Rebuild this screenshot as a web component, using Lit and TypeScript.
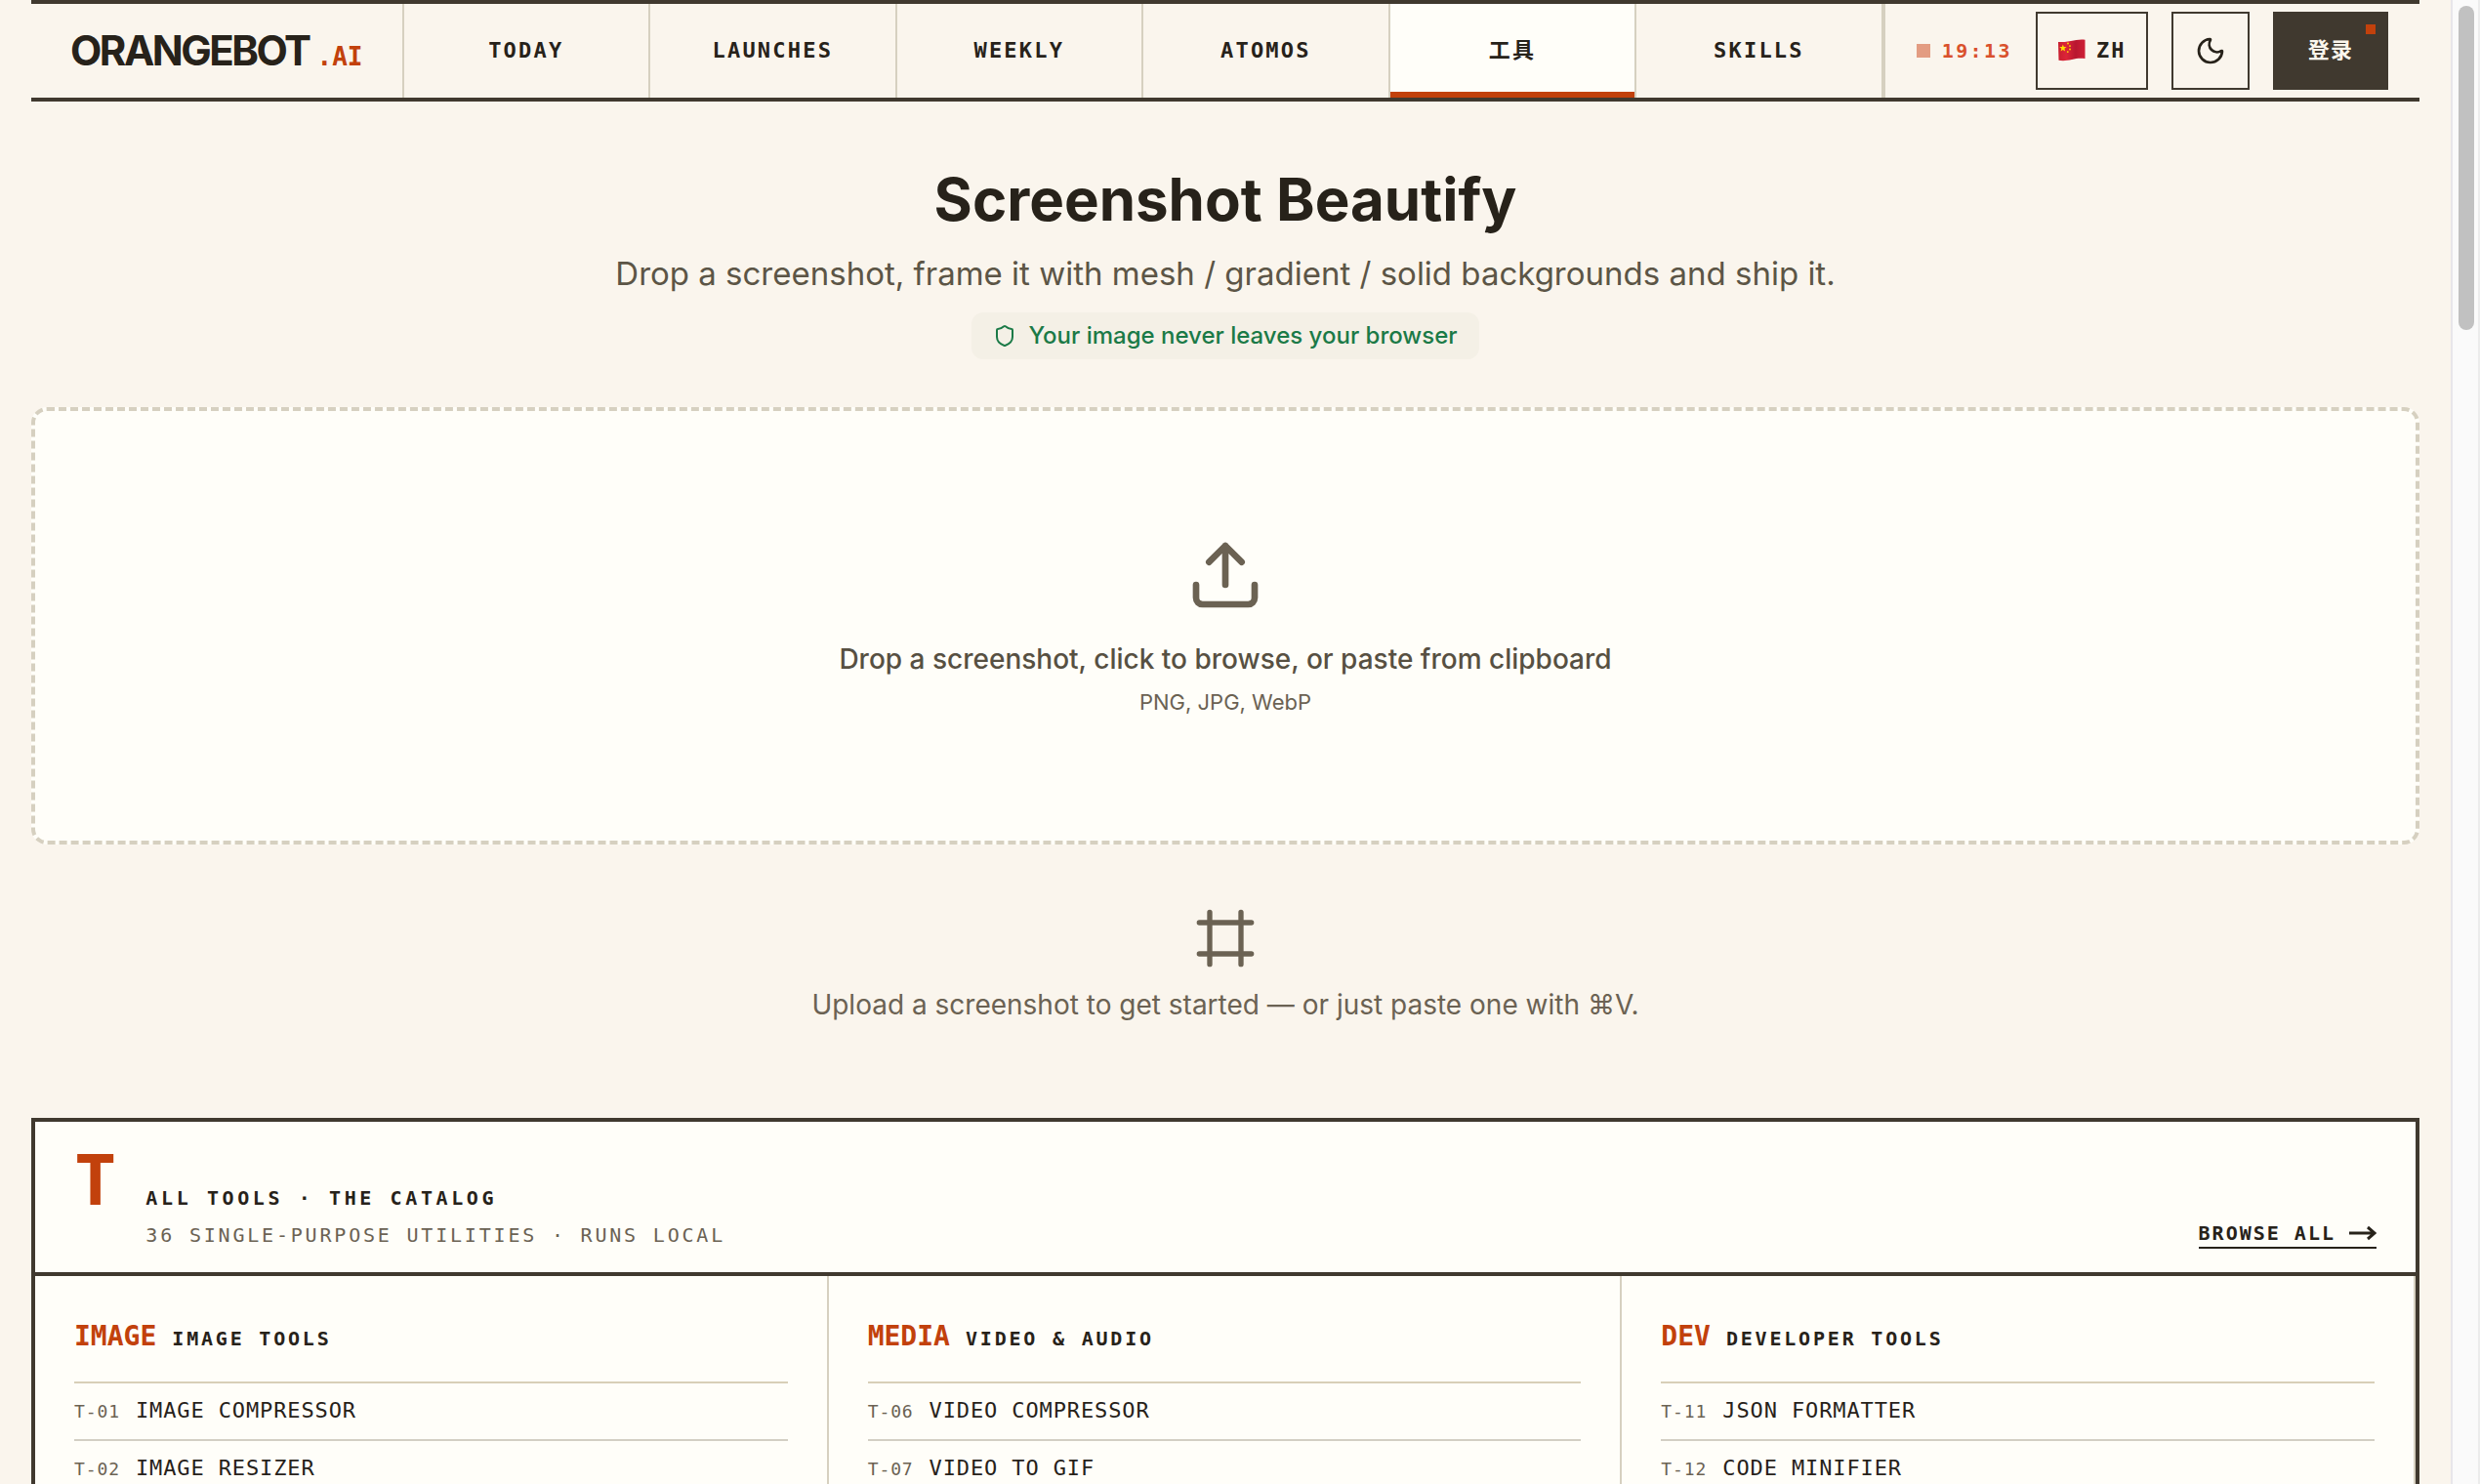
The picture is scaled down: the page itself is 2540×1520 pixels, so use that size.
import { LitElement, html, css, svg } from "lit";
import { customElement, property } from "lit/decorators.js";

interface Tool {
  code: string;
  name: string;
}

interface Category {
  key: string;
  title: string;
  tools: Tool[];
}

const NAV = [
  { label: "TODAY", href: "#today" },
  { label: "LAUNCHES", href: "#launches" },
  { label: "WEEKLY", href: "#weekly" },
  { label: "ATOMOS", href: "#atomos" },
  { label: "工具", href: "#tools", active: true },
  { label: "SKILLS", href: "#skills" },
];

const CATEGORIES: Category[] = [
  {
    key: "IMAGE",
    title: "IMAGE TOOLS",
    tools: [
      { code: "T-01", name: "IMAGE COMPRESSOR" },
      { code: "T-02", name: "IMAGE RESIZER" },
    ],
  },
  {
    key: "MEDIA",
    title: "VIDEO & AUDIO",
    tools: [
      { code: "T-06", name: "VIDEO COMPRESSOR" },
      { code: "T-07", name: "VIDEO TO GIF" },
    ],
  },
  {
    key: "DEV",
    title: "DEVELOPER TOOLS",
    tools: [
      { code: "T-11", name: "JSON FORMATTER" },
      { code: "T-12", name: "CODE MINIFIER" },
    ],
  },
];

const ICONS = {
  moon: svg`<path d="M20.985 12.486a9 9 0 1 1-9.473-9.472c.405-.022.617.46.402.803a6 6 0 0 0 8.268 8.268c.344-.215.825-.004.803.401" />`,
  shield: svg`<path d="M20 13c0 5-3.5 7.5-7.66 8.95a1 1 0 0 1-.67-.01C7.5 20.5 4 18 4 13V6a1 1 0 0 1 1-1c2 0 4.5-1.2 6.24-2.72a1.17 1.17 0 0 1 1.52 0C14.51 3.81 17 5 19 5a1 1 0 0 1 1 1z" />`,
  upload: svg`<path d="M12 3v12M17 8l-5-5-5 5M21 15v4a2 2 0 0 1-2 2H5a2 2 0 0 1-2-2v-4" />`,
  frame: svg`<path d="M22 6H2M22 18H2M6 2v20M18 2v20" />`,
};

@customElement("line-icon")
export class LineIcon extends LitElement {
  @property() name: keyof typeof ICONS = "moon";

  static styles = css`
    :host {
      display: block;
      flex: none;
    }
    .icon {
      display: block;
      width: 100%;
      height: 100%;
      fill: none;
      stroke: currentColor;
      stroke-width: 2;
      stroke-linecap: round;
      stroke-linejoin: round;
    }
  `;

  render() {
    return html`<svg class="icon" viewBox="0 0 24 24" aria-hidden="true">${ICONS[this.name]}</svg>`;
  }
}

@customElement("site-header")
export class SiteHeader extends LitElement {
  static styles = css`
    :host {
      display: block;
    }
    .bar {
      display: flex;
      height: 96px;
      border-top: 4px solid #40392f;
      border-bottom: 4px solid #40392f;
      font: 700 22px/30px "DejaVu Sans Mono", "Noto Sans CJK SC", monospace;
      color: #27221a;
    }
    .brand {
      display: flex;
      align-items: baseline;
      gap: 8px;
      padding: 20px 40px;
      border-right: 2px solid #d6d0c0;
      color: inherit;
      text-decoration: none;
    }
    .brand-name {
      font: 700 42px/56px Inter, sans-serif;
      letter-spacing: -0.06em;
    }
    .brand-tld {
      font-size: 26px;
      color: #c2410c;
    }
    .nav {
      display: flex;
      flex: 1;
    }
    .nav-link {
      display: flex;
      flex: 1 1 0;
      align-items: center;
      justify-content: center;
      border-right: 2px solid #d6d0c0;
      letter-spacing: 0.1em;
      color: inherit;
      text-decoration: none;
    }
    .nav-link.active {
      background: #fffef9;
      box-shadow: inset 0 -6px #c2410c;
    }
    .actions {
      display: flex;
      align-items: center;
      gap: 24px;
      padding: 0 32px;
      border-left: 2px solid #d6d0c0;
    }
    .clock {
      display: flex;
      align-items: center;
      gap: 12px;
      font-size: 20px;
      letter-spacing: 0.12em;
      color: #d9512c;
    }
    .clock-dot {
      width: 14px;
      height: 14px;
      background: #e39c82;
    }
    .button {
      position: relative;
      box-sizing: border-box;
      display: flex;
      align-items: center;
      justify-content: center;
      height: 80px;
      padding: 0 20px;
      border: 2px solid #40392f;
      background: none;
      color: inherit;
      font: inherit;
      letter-spacing: 0.1em;
    }
    .lang {
      gap: 10px;
    }
    .flag {
      width: 30px;
      height: 24px;
    }
    .theme {
      width: 80px;
    }
    .moon {
      width: 32px;
      height: 32px;
    }
    .login {
      padding: 0 34px;
      background: #40392f;
      color: #fbf6ec;
      letter-spacing: 0.05em;
    }
    .login-dot {
      position: absolute;
      top: 11px;
      right: 11px;
      width: 10px;
      height: 10px;
      background: #c2410c;
    }
  `;

  render() {
    return html`
      <header class="bar">
        <a class="brand" href="#home">
          <span class="brand-name">ORANGEBOT</span><span class="brand-tld">.AI</span>
        </a>
        <nav class="nav">
          ${NAV.map(
            (item) => html`<a class="nav-link ${item.active ? "active" : ""}" href=${item.href}>${item.label}</a>`,
          )}
        </nav>
        <div class="actions">
          <div class="clock"><span class="clock-dot"></span><time>19:13</time></div>
          <button class="button lang">
            <svg class="flag" viewBox="0 0 30 24" aria-hidden="true">
              <defs>
                <linearGradient id="cloth" x1="0" x2="1" y1="0" y2="0">
                  <stop offset="0" stop-color="#c81e2e" />
                  <stop offset="0.3" stop-color="#dc2438" />
                  <stop offset="0.65" stop-color="#b81730" />
                  <stop offset="1" stop-color="#cf2036" />
                </linearGradient>
              </defs>
              <path fill="url(#cloth)" d="M1 3C6 3 9 3 14 2C19 1 24 0 28.500 0.800V20C24 19.500 20 19.500 15 21C10 22.100 6 22.600 1.500 21.800Z" />
              <path fill="#ffde00" d="M5.800 5.500l1 2.500 2.700.1-2.100 1.700.7 2.600-2.300-1.500-2.200 1.500.7-2.600L2.200 8.100l2.700-.1z" />
              <circle fill="#ffde00" cx="11" cy="4.500" r="0.900" />
              <circle fill="#ffde00" cx="13" cy="7.100" r="0.900" />
              <circle fill="#ffde00" cx="13" cy="10.500" r="0.900" />
              <circle fill="#ffde00" cx="10.800" cy="13.100" r="0.900" />
            </svg>
            <span>ZH</span>
          </button>
          <button class="button theme" aria-label="Theme"><line-icon class="moon" name="moon"></line-icon></button>
          <button class="button login">登录<span class="login-dot"></span></button>
        </div>
      </header>
    `;
  }
}

@customElement("tool-catalog")
export class ToolCatalog extends LitElement {
  static styles = css`
    :host {
      display: block;
    }
    .catalog {
      border: 4px solid #40392f;
      background: #fffef9;
      color: #27221a;
      font: 400 20px/28px "DejaVu Sans Mono", monospace;
    }
    .head {
      display: flex;
      align-items: flex-end;
      justify-content: space-between;
      padding: 24px 40px;
      border-bottom: 4px solid #40392f;
    }
    .intro {
      display: flex;
      align-items: baseline;
      gap: 30px;
    }
    .initial {
      font-size: 72px;
      line-height: 72px;
      font-weight: 700;
      color: #c2410c;
    }
    .title {
      margin: 0;
      font-size: 20px;
      font-weight: 700;
      letter-spacing: 0.18em;
    }
    .summary {
      margin: 10px 0 0;
      letter-spacing: 0.14em;
      color: #6b6253;
    }
    .browse {
      display: flex;
      align-items: center;
      gap: 14px;
      border-bottom: 2px solid #27221a;
      font-weight: 700;
      letter-spacing: 0.1em;
      color: inherit;
      text-decoration: none;
    }
    .arrow {
      width: 28px;
      height: 16px;
      fill: none;
      stroke: currentColor;
      stroke-width: 3;
    }
    .columns {
      display: grid;
      grid-template-columns: repeat(3, 1fr);
    }
    .column {
      padding: 42px 40px 40px;
      border-right: 2px solid #d6d0c0;
    }
    .column-head {
      display: flex;
      align-items: baseline;
      gap: 16px;
      margin: 0;
      padding-bottom: 24px;
      border-bottom: 2px solid #d8cfb8;
      font-size: 20px;
      line-height: 40px;
      font-weight: 700;
      letter-spacing: 0.14em;
    }
    .key {
      font-size: 28px;
      letter-spacing: 0;
      color: #c2410c;
    }
    .list {
      margin: 0;
      padding: 0;
      list-style: none;
    }
    .tool {
      display: flex;
      align-items: baseline;
      gap: 16px;
      padding: 13px 0;
      border-bottom: 2px solid #d3cfc4;
      line-height: 30px;
      color: inherit;
      text-decoration: none;
    }
    .code {
      font-size: 18px;
      letter-spacing: 0.05em;
      color: #6b6253;
    }
    .name {
      font-size: 22px;
      letter-spacing: 0.04em;
    }
  `;

  render() {
    return html`
      <section class="catalog">
        <div class="head">
          <div class="intro">
            <span class="initial">T</span>
            <div>
              <h2 class="title">ALL TOOLS · THE CATALOG</h2>
              <p class="summary">36 SINGLE-PURPOSE UTILITIES · RUNS LOCAL</p>
            </div>
          </div>
          <a class="browse" href="#all">
            <span>BROWSE ALL</span>
            <svg class="arrow" viewBox="0 0 28 16" aria-hidden="true"><path d="M0 8H26M19 2L26 8L19 14" /></svg>
          </a>
        </div>
        <div class="columns">
          ${CATEGORIES.map(
            (category) => html`
              <div class="column">
                <h3 class="column-head"><span class="key">${category.key}</span><span>${category.title}</span></h3>
                <ul class="list">
                  ${category.tools.map(
                    (tool) => html`
                      <li>
                        <a class="tool" href="#${tool.code}">
                          <span class="code">${tool.code}</span><span class="name">${tool.name}</span>
                        </a>
                      </li>
                    `,
                  )}
                </ul>
              </div>
            `,
          )}
        </div>
      </section>
    `;
  }
}

@customElement("app-root")
export class AppRoot extends LitElement {
  static styles = css`
    :host {
      display: flex;
      height: 100vh;
      background: #faf5ed;
      color: #27221a;
      font-family: Inter, sans-serif;
    }
    .page {
      flex: 1;
      min-width: 0;
      padding: 0 32px;
      overflow-y: auto;
      scrollbar-width: none;
    }
    .scrollbar {
      flex: none;
      box-sizing: border-box;
      width: 30px;
      padding: 6px;
      border-left: 2px solid #e8e6ea;
      border-right: 2px solid #ececec;
      background: #fafafa;
    }
    .thumb {
      width: 16px;
      height: 22%;
      border-radius: 8px;
      background: #c1c1c1;
    }
    .hero {
      display: flex;
      flex-direction: column;
      align-items: center;
      padding: 64px 0 49px;
      text-align: center;
    }
    .title {
      margin: 0;
      font-size: 60px;
      line-height: 72px;
      font-weight: 700;
    }
    .lead {
      margin: 16px 0;
      font-size: 33px;
      line-height: 48px;
      color: #5c5546;
    }
    .privacy {
      display: flex;
      align-items: center;
      gap: 12px;
      padding: 8px 22px;
      border-radius: 12px;
      background: #f4f0e6;
      font-size: 24px;
      line-height: 32px;
      font-weight: 500;
      color: #1b7a47;
    }
    .shield {
      width: 24px;
      height: 24px;
    }
    .drop {
      box-sizing: border-box;
      display: flex;
      flex-direction: column;
      align-items: center;
      width: 100%;
      padding: 128px 32px 124px;
      border: 4px dashed #d6d0c0;
      border-radius: 16px;
      background: #fffef9;
      font: inherit;
      color: #6b6253;
    }
    .upload {
      width: 80px;
      height: 80px;
    }
    .drop-label {
      margin-top: 24px;
      font-size: 28px;
      line-height: 44px;
      font-weight: 500;
      color: #575042;
    }
    .drop-types {
      margin-top: 4px;
      font-size: 22px;
      line-height: 36px;
    }
    .empty {
      display: flex;
      flex-direction: column;
      align-items: center;
      gap: 14px;
      padding: 64px 0 94px;
      color: #6b6253;
    }
    .frame {
      width: 64px;
      height: 64px;
    }
    .empty-text {
      margin: 0;
      font-size: 28px;
      line-height: 44px;
    }
  `;

  render() {
    return html`
      <div class="page">
        <site-header></site-header>
        <main>
          <section class="hero">
            <h1 class="title">Screenshot Beautify</h1>
            <p class="lead">Drop a screenshot, frame it with mesh / gradient / solid backgrounds and ship it.</p>
            <div class="privacy">
              <line-icon class="shield" name="shield"></line-icon>
              <span>Your image never leaves your browser</span>
            </div>
          </section>
          <button class="drop">
            <line-icon class="upload" name="upload"></line-icon>
            <span class="drop-label">Drop a screenshot, click to browse, or paste from clipboard</span>
            <span class="drop-types">PNG, JPG, WebP</span>
          </button>
          <section class="empty">
            <line-icon class="frame" name="frame"></line-icon>
            <p class="empty-text">Upload a screenshot to get started — or just paste one with ⌘V.</p>
          </section>
          <tool-catalog></tool-catalog>
        </main>
      </div>
      <div class="scrollbar"><div class="thumb"></div></div>
    `;
  }
}
